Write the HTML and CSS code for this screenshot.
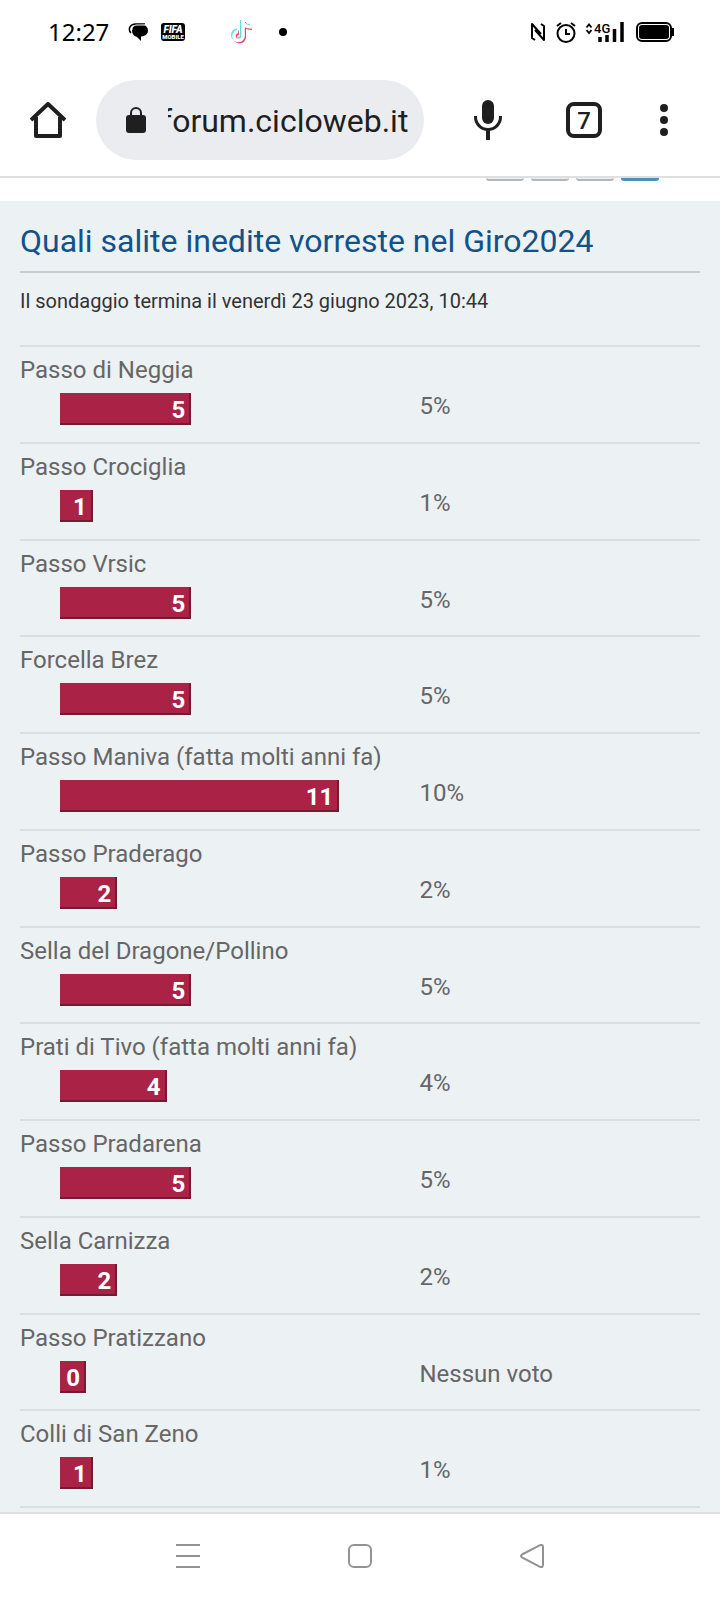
FILE: index.html
```html
<!DOCTYPE html>
<html lang="it">
<head>
    <meta charset="UTF-8">
    <meta name="viewport" content="width=device-width, initial-scale=1.0">
    <title>Quali salite inedite vorreste nel Giro2024</title>
    <link rel="stylesheet" href="styles.css">
</head>
<body>
    <div class="status-bar">
        <span class="clock">12:27</span>
        <svg class="notifications" width="160" height="28" viewBox="0 -1 160 28">
            <path d="M4 11c0-4 3-6 8-6 5 0 8 3 8 6.500 0 3-2 5.500-7 6V22l-4-4c-3-1-5-3-5-7z"/>
            <path d="M3 14C0 11 1 5 8 5h9" fill="none" stroke="#000" stroke-width="1.500"/>
            <path d="M4 11c0-4 3-5 6-5h7" fill="none" stroke="#fff" stroke-width="1"/>
            <rect x="33" y="4" width="24" height="18" rx="3"/>
            <text x="45" y="14" class="fifa">FIFA</text>
            <text x="45" y="20" class="fifa-small">MOBILE</text>
            <g fill="none" stroke-width="4">
                <path d="M114 1v15a4.500 4.500 0 1 1-5-4.500M114 1c0 4 3 6 8 6" stroke="#5fe0df"/>
                <path d="M116 3v15a4.500 4.500 0 1 1-5-4.500M116 3c0 4 3 6 8 6" stroke="#e5476b"/>
                <path d="M115 1v16a4.500 4.500 0 1 1-5-4.500M115 2c0 4 3 6 9 6" stroke="#fff" stroke-width="3.600"/>
            </g>
            <circle cx="155" cy="13" r="4"/>
        </svg>
        <svg class="system" width="144" height="24" viewBox="0 -1 144 24">
            <path d="M5 19l-3-2V3l9 10M11 3l3 2v14L5 9" fill="none" stroke="#000" stroke-width="2" stroke-linejoin="round"/>
            <g fill="none" stroke="#000" stroke-width="2">
                <circle cx="36" cy="12.500" r="8.500"/>
                <path d="M36 8v5h4M27 5l4-3M45 5l-4-3"/>
                <path d="M56.500 6.500l2.500-3 2.500 3M56.500 9l2.500 3 2.500-3" stroke-width="1.800"/>
            </g>
            <text x="64" y="12" class="network">4G</text>
            <path d="M70 21v-5M77 21v-7M84.500 21V8M92 21V1" fill="none" stroke="#000" stroke-width="3.500"/>
            <rect x="107" y="2" width="34" height="18" rx="5" fill="none" stroke="#000" stroke-width="2"/>
            <rect x="109" y="4" width="30" height="14" rx="3"/>
            <path d="M142 7h2v8h-2z"/>
        </svg>
    </div>

    <header class="toolbar">
        <button class="tool" aria-label="Home">
            <svg width="36" height="36" viewBox="0 0 36 36">
                <path d="M1 18L18 2l17 16M6 15v19h24V15" fill="none" stroke="#1f1f1f" stroke-width="4" stroke-linejoin="round"/>
            </svg>
        </button>
        <div class="address">
            <svg width="20" height="26" viewBox="0 0 20 26">
                <rect y="8" width="20" height="18" rx="3" fill="#1f1f1f"/>
                <path d="M5 9V6a5 5 0 0 1 10 0v3" fill="none" stroke="#1f1f1f" stroke-width="2"/>
            </svg>
            <input type="text" value="forum.cicloweb.it" aria-label="Indirizzo">
        </div>
        <button class="tool" aria-label="Ricerca vocale">
            <svg width="28" height="40" viewBox="0 0 28 40">
                <rect x="8" width="12" height="24" rx="6" fill="#1f1f1f"/>
                <path d="M1.500 16v1a12.500 12.500 0 0 0 25 0v-1" fill="none" stroke="#1f1f1f" stroke-width="3"/>
                <path d="M14 29v11" fill="none" stroke="#1f1f1f" stroke-width="4"/>
            </svg>
        </button>
        <button class="tool" aria-label="Schede aperte"><span class="tabs">7</span></button>
        <button class="tool tool-menu" aria-label="Menu">
            <svg width="8" height="32" viewBox="0 0 8 32" fill="#1f1f1f">
                <circle cx="4" cy="4" r="4"/>
                <circle cx="4" cy="16" r="4"/>
                <circle cx="4" cy="28" r="4"/>
            </svg>
        </button>
    </header>

    <!-- bottom edge of the page links, scrolled under the toolbar -->
    <nav class="pagination">
        <a href="#" aria-label="Pagina 1"></a>
        <a href="#" aria-label="Pagina 2"></a>
        <a href="#" aria-label="Pagina 3"></a>
        <a href="#" class="active" aria-label="Pagina 4"></a>
    </nav>

    <main class="poll">
        <h2>Quali salite inedite vorreste nel Giro2024</h2>
        <p>Il sondaggio termina il venerdì 23 giugno 2023, 10:44</p>
        <div class="options">
            <dl>
                <dt>Passo di Neggia</dt>
                <dd class="result"><span class="bar" style="--votes: 5">5</span></dd>
                <dd class="percent">5%</dd>
            </dl>
            <dl>
                <dt>Passo Crociglia</dt>
                <dd class="result"><span class="bar" style="--votes: 1">1</span></dd>
                <dd class="percent">1%</dd>
            </dl>
            <dl>
                <dt>Passo Vrsic</dt>
                <dd class="result"><span class="bar" style="--votes: 5">5</span></dd>
                <dd class="percent">5%</dd>
            </dl>
            <dl>
                <dt>Forcella Brez</dt>
                <dd class="result"><span class="bar" style="--votes: 5">5</span></dd>
                <dd class="percent">5%</dd>
            </dl>
            <dl>
                <dt>Passo Maniva (fatta molti anni fa)</dt>
                <dd class="result"><span class="bar" style="--votes: 11">11</span></dd>
                <dd class="percent">10%</dd>
            </dl>
            <dl>
                <dt>Passo Praderago</dt>
                <dd class="result"><span class="bar" style="--votes: 2">2</span></dd>
                <dd class="percent">2%</dd>
            </dl>
            <dl>
                <dt>Sella del Dragone/Pollino</dt>
                <dd class="result"><span class="bar" style="--votes: 5">5</span></dd>
                <dd class="percent">5%</dd>
            </dl>
            <dl>
                <dt>Prati di Tivo (fatta molti anni fa)</dt>
                <dd class="result"><span class="bar" style="--votes: 4">4</span></dd>
                <dd class="percent">4%</dd>
            </dl>
            <dl>
                <dt>Passo Pradarena</dt>
                <dd class="result"><span class="bar" style="--votes: 5">5</span></dd>
                <dd class="percent">5%</dd>
            </dl>
            <dl>
                <dt>Sella Carnizza</dt>
                <dd class="result"><span class="bar" style="--votes: 2">2</span></dd>
                <dd class="percent">2%</dd>
            </dl>
            <dl>
                <dt>Passo Pratizzano</dt>
                <dd class="result"><span class="bar" style="--votes: 0">0</span></dd>
                <dd class="percent">Nessun voto</dd>
            </dl>
            <dl>
                <dt>Colli di San Zeno</dt>
                <dd class="result"><span class="bar" style="--votes: 1">1</span></dd>
                <dd class="percent">1%</dd>
            </dl>
        </div>
    </main>

    <footer class="system-nav">
        <button aria-label="Recenti">
            <svg width="24" height="24" viewBox="0 0 24 24"><path d="M0 1h24M0 12h24M0 23h24"/></svg>
        </button>
        <button aria-label="Schermata principale">
            <svg width="24" height="24" viewBox="0 0 24 24"><rect x="1" y="1" width="22" height="22" rx="5"/></svg>
        </button>
        <button aria-label="Indietro">
            <svg width="24" height="24" viewBox="0 0 24 24"><path d="M2 10.500L20 1.200q3-1 3 2v17.600q0 3-3 2L2 13.500q-2-1.500 0-3z"/></svg>
        </button>
    </footer>
</body>
</html>
```

FILE: styles.css
```css
* {
    box-sizing: border-box;
}
body {
    display: flex;
    flex-direction: column;
    min-height: 100vh;
    margin: 0;
    background: #fff;
    font-family: Roboto, "Liberation Sans", sans-serif;
}
button {
    display: flex;
    align-items: center;
    justify-content: center;
    padding: 0;
    border: none;
    background: none;
    font-family: inherit;
}
.status-bar {
    display: flex;
    align-items: center;
    height: 64px;
    padding: 0 46px 0 48px;
}
.clock {
    width: 80px;
    font-family: "Noto Sans", sans-serif;
    font-size: 24px;
    line-height: 32px;
    color: #000;
}
.system {
    margin-left: auto;
}
.fifa, .fifa-small {
    fill: #fff;
    font-size: 10px;
    font-weight: 900;
    font-style: italic;
    text-anchor: middle;
}
.fifa-small {
    font-size: 6px;
    font-style: normal;
}
.network {
    font-size: 13px;
    font-weight: 500;
}
.toolbar {
    display: flex;
    align-items: center;
    height: 114px;
    padding-right: 24px;
    border-bottom: 2px solid #dedfe0;
}
.tool {
    flex: none;
    width: 96px;
    height: 80px;
}
.tool-menu {
    width: 64px;
}
.address {
    display: flex;
    flex: 1;
    align-items: center;
    gap: 22px;
    min-width: 0;
    height: 80px;
    margin-right: 16px;
    padding: 0 12px 0 30px;
    border-radius: 40px;
    background: #ebecf0;
}
.address svg {
    flex: none;
}
.address input {
    flex: 1;
    min-width: 0;
    padding: 2px 0 0;
    border: none;
    outline: none;
    background: none;
    color: #1f1f1f;
    font-family: inherit;
    font-size: 32px;
    line-height: 40px;
    text-indent: -7px;
}
.tabs {
    width: 36px;
    height: 36px;
    border: 4px solid #1f1f1f;
    border-radius: 8px;
    color: #1f1f1f;
    font-size: 24px;
    font-weight: 500;
    line-height: 30px;
}
.pagination {
    display: flex;
    justify-content: flex-end;
    gap: 7px;
    height: 23px;
    padding-right: 61px;
}
.pagination a {
    width: 38px;
    height: 3px;
    border-bottom: 2px solid #b4b7ba;
    border-radius: 0 0 4px 4px;
    background: #ecedee;
}
.pagination .active {
    border-color: #4692bf;
    background: #4692bf;
}
.poll {
    display: flex;
    flex: 1;
    flex-direction: column;
    padding: 20px 20px 4px;
    background: #ecf1f3;
}
h2 {
    margin: 0;
    padding-bottom: 10px;
    border-bottom: 2px solid #c8cccc;
    color: #105289;
    font-size: 32px;
    font-weight: normal;
    line-height: 40px;
}
.poll p {
    margin: 16px 0 32px;
    color: #333;
    font-size: 20px;
    line-height: 24px;
}
.options {
    display: grid;
    flex: 1;
    grid-auto-rows: 1fr;
    border-bottom: 2px solid #dadee0;
    color: #666;
    font-size: 24px;
}
.options dl {
    display: grid;
    grid-template-columns: 9fr 7fr;
    align-content: start;
    row-gap: 4px;
    margin: 0;
    padding: 8px 0;
    border-top: 2px solid #dadee0;
}
.options dt {
    grid-column: 1 / -1;
    line-height: 30px;
}
.options dd {
    margin: 0;
}
.result {
    padding: 4px 0 0 40px;
}
.percent {
    padding-left: 17px;
    line-height: 34px;
}
.bar {
    display: block;
    width: calc(var(--votes) * 7.2% + 8px);
    min-width: 26px;
    height: 32px;
    padding: 0 4px;
    border-right: 2px solid #721c32;
    border-bottom: 2px solid #721c32;
    background: #aa2346;
    color: #fff;
    font-weight: bold;
    line-height: 34px;
    text-align: right;
}
.system-nav {
    display: flex;
    justify-content: center;
    height: 88px;
    padding-bottom: 2px;
    border-top: 2px solid #dedfe0;
}
.system-nav button {
    width: 172px;
}
.system-nav svg {
    fill: none;
    stroke: #929292;
    stroke-width: 2;
}
```
